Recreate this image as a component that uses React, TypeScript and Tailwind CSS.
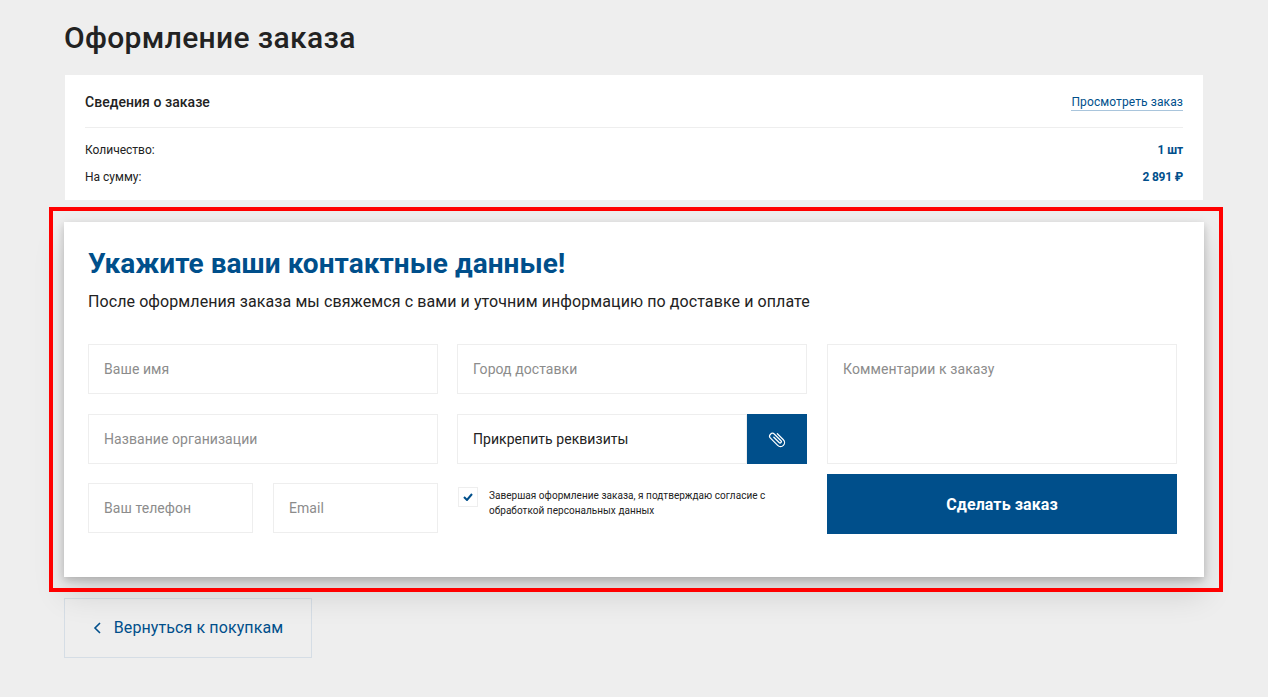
const blue = "text-[#004f8b]";

const Field = ({ label, className = "" }: { label: string; className?: string }) => (
  <div className={`flex h-[50px] items-center border border-[#eeeeee] bg-white px-[15px] text-sm tracking-[0.07px] text-[#8c8c8c] ${className}`}>
    {label}
  </div>
);

const PaperclipIcon = () => (
  <svg width="18" height="18" viewBox="0 0 18 18" fill="none" stroke="white" strokeWidth="1.25" strokeLinecap="round">
    <g transform="rotate(-45 9 9)">
      <path d="M13 5.500v8.500a4 4 0 0 1-8 0V3.800a2.800 2.800 0 0 1 5.600 0V13a1.300 1.300 0 0 1-2.600 0V5.500" />
    </g>
  </svg>
);

const App = () => {
  return (
    <div className="min-h-[697px] bg-[#eeeeee] font-['Roboto',sans-serif] text-[#222222]">
      <div className="mx-auto flex w-[1140px] flex-col">
        <h1 className="flex h-[75px] items-center text-[30px] font-medium tracking-[0.35px] text-[#222222]">
          Оформление заказа
        </h1>

        {/* Order summary */}
        <div className="mx-px h-[125px] bg-white px-5">
          <div className="flex h-[53px] items-center justify-between border-b border-[#eeeeee] pt-[2px]">
            <span className="text-sm font-medium tracking-[0.05px]">Сведения о заказе</span>
            <a className={`mt-px border-b border-[#a9c5dc] text-xs leading-[16px] tracking-[0.1px] ${blue}`}>Просмотреть заказ</a>
          </div>
          <div className="mt-[15px] flex justify-between text-xs leading-[15px]">
            <span>Количество:</span>
            <span className={`font-bold tracking-[-0.1px] ${blue}`}>1 шт</span>
          </div>
          <div className="mt-[12px] flex justify-between text-xs leading-[15px]">
            <span>На сумму:</span>
            <span className={`font-bold tracking-[-0.2px] ${blue}`}>2 891 ₽</span>
          </div>
        </div>

        {/* Contact form */}
        <div className="relative mt-[22px] h-[355px] bg-white pl-6 pt-6 shadow-[0_18px_30px_rgba(0,0,0,0.12),0_3px_8px_rgba(0,0,0,0.2)]">
          <div className="pointer-events-none absolute -top-[15px] -right-[19px] -bottom-[15px] -left-[15px] border-4 border-[#ff0000]" />
          <h2 className={`text-[28px] leading-[36px] font-bold tracking-[0.03px] ${blue}`}>Укажите ваши контактные данные!</h2>
          <p className="mt-[10px] text-base leading-[20px] tracking-[0.09px] text-[#222222]">
            После оформления заказа мы свяжемся с вами и уточним информацию по доставке и оплате
          </p>

          <div className="mt-[32px] grid grid-cols-[350px_350px_350px] gap-x-[19px]">
            <div className="flex flex-col gap-[20px]">
              <Field label="Ваше имя" />
              <Field label="Название организации" />
              <div className="-mt-[1px] flex gap-5">
                <Field label="Ваш телефон" className="w-[165px]" />
                <Field label="Email" className="w-[165px]" />
              </div>
            </div>

            <div className="flex flex-col gap-[20px]">
              <Field label="Город доставки" />
              <div className="flex h-[50px]">
                <div className="flex flex-1 items-center border border-[#eeeeee] px-[15px] text-sm tracking-[0.05px] text-[#222222]">
                  Прикрепить реквизиты
                </div>
                <div className="flex w-[60px] items-center justify-center bg-[#004f8b]">
                  <PaperclipIcon />
                </div>
              </div>
              <div className="flex gap-[11px] pl-[1px]">
                <div className="mt-[3px] flex h-5 w-5 shrink-0 items-center justify-center border border-[#eeeeee]">
                  <svg width="10" height="8" viewBox="0 0 10 8" fill="none" stroke="#004f8b" strokeWidth="2">
                    <path d="M1 4l3 3 5-6" />
                  </svg>
                </div>
                <p className="mt-1 text-[10px] leading-[15px] tracking-[0.04px] text-[#222222]">
                  Завершая оформление заказа, я подтверждаю согласие с обработкой персональных данных
                </p>
              </div>
            </div>

            <div className="ml-px flex w-[350px] flex-col gap-[10px]">
              <div className="h-[120px] border border-[#eeeeee] px-[15px] py-[14px] text-sm leading-[20px] tracking-[0.1px] text-[#8c8c8c]">
                Комментарии к заказу
              </div>
              <button className="h-[60px] bg-[#004f8b] pt-px text-base font-bold tracking-[0.1px] text-white">Сделать заказ</button>
            </div>
          </div>
        </div>

        <a className={`mt-[21px] flex h-[60px] w-[248px] items-center justify-center gap-[13px] border border-[#d5dde5] text-base tracking-[0.1px] ${blue}`}>
          <svg width="8" height="12" viewBox="0 0 8 12" fill="none" stroke="#004f8b" strokeWidth="1.6">
            <path d="M7 1 2 6l5 5" />
          </svg>
          Вернуться к покупкам
        </a>
      </div>
    </div>
  );
};

export default App;
